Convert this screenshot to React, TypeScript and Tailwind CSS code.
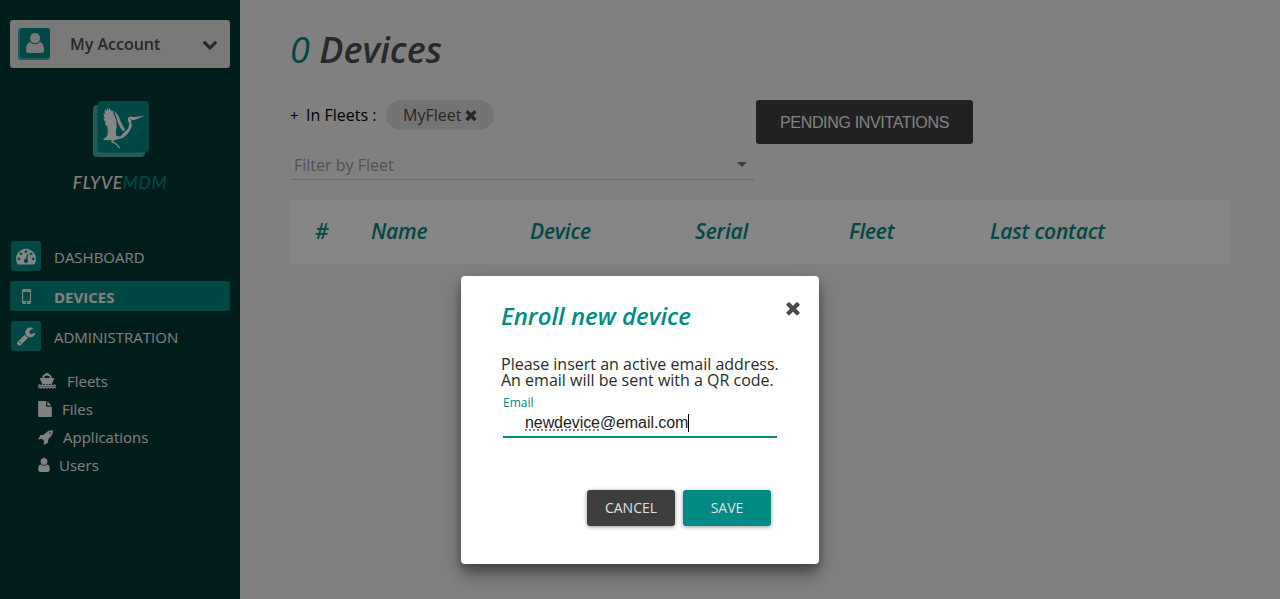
import React from "react";

const PATHS = {
  user: "M1536 1399q0 109-62.5 187t-150.5 78h-854q-88 0-150.5-78t-62.5-187q0-85 8.5-160.5t31.5-152 58.5-131 94-89 134.5-34.5q131 128 313 128t313-128q76 0 134.5 34.5t94 89 58.5 131 31.5 152 8.5 160.5zm-256-887q0 159-112.5 271.5t-271.5 112.5-271.5-112.5-112.5-271.5 112.5-271.5 271.5-112.5 271.5 112.5 112.5 271.5z",
  close: "M1490 1322q0 40-28 68l-136 136q-28 28-68 28t-68-28l-294-294-294 294q-28 28-68 28t-68-28l-136-136q-28-28-28-68t28-68l294-294-294-294q-28-28-28-68t28-68l136-136q28-28 68-28t68 28l294 294 294-294q28-28 68-28t68 28l136 136q28 28 28 68t-28 68l-294 294 294 294q28 28 28 68z",
  chevron: "M1683 808l-742 741q-19 19-45 19t-45-19l-742-741q-19-19-19-45.5t19-45.5l166-165q19-19 45-19t45 19l531 531 531-531q19-19 45-19t45 19l166 165q19 19 19 45.5t-19 45.5z",
  gauge: "M384 1152q0-53-37.5-90.5t-90.5-37.5-90.5 37.5-37.5 90.5 37.5 90.5 90.5 37.5 90.5-37.5 37.5-90.5zm192-448q0-53-37.5-90.5t-90.5-37.5-90.5 37.5-37.5 90.5 37.5 90.5 90.5 37.5 90.5-37.5 37.5-90.5zm428 481l101-382q6-26-7.5-48.5t-38.5-29.5-48 6.5-30 39.5l-101 382q-60 5-107 43.5t-63 98.5q-20 77 20 146t117 89 146-20 89-117q16-60-6-117t-72-91zm660-33q0-53-37.5-90.5t-90.5-37.5-90.5 37.5-37.5 90.5 37.5 90.5 90.5 37.5 90.5-37.5 37.5-90.5zm-640-640q0-53-37.5-90.5t-90.5-37.5-90.5 37.5-37.5 90.5 37.5 90.5 90.5 37.5 90.5-37.5 37.5-90.5zm448 192q0-53-37.5-90.5t-90.5-37.5-90.5 37.5-37.5 90.5 37.5 90.5 90.5 37.5 90.5-37.5 37.5-90.5zm320 448q0 261-141 483-19 29-54 29h-1402q-35 0-54-29-141-221-141-483 0-182 71-348t191-286 286-191 348-71 348 71 286 191 191 286 71 348z",
  wrench: "M448 1472q0-26-19-45t-45-19-45 19-19 45 19 45 45 19 45-19 19-45zm644-420l-682 682q-37 37-90 37-52 0-91-37l-106-108q-38-36-38-90 0-53 38-91l681-681q39 98 114.5 173.5t173.5 114.5zm634-435q0 39-23 106-47 134-164.5 217.5t-258.5 83.5q-185 0-316.5-131.5t-131.5-316.5 131.5-316.5 316.5-131.5q58 0 121.5 16.5t107.5 46.5q16 11 16 28t-16 28l-293 169v224l193 107q5-3 79-48.5t135.5-81 70.5-35.5q15 0 23.5 10t8.5 25z",
  mobile: "M976 1408q0-33-23.5-56.5t-56.5-23.5-56.5 23.5-23.5 56.5 23.5 56.5 56.5 23.5 56.5-23.5 23.5-56.5zm208-160v-704q0-13-9.5-22.5t-22.5-9.5h-512q-13 0-22.5 9.5t-9.5 22.5v704q0 13 9.5 22.5t22.5 9.5h512q13 0 22.5-9.5t9.5-22.5zm-192-848q0-16-16-16h-160q-16 0-16 16t16 16h160q16 0 16-16zm288-16v1024q0 52-38 90t-90 38h-512q-52 0-90-38t-38-90v-1024q0-52 38-90t90-38h512q52 0 90 38t38 90z",
  rocket: "M1440 448q0-40-28-68t-68-28-68 28-28 68 28 68 68 28 68-28 28-68zm224-288q0 249-75.5 430.5t-253.5 360.5q-81 80-195 176l-20 379q-2 16-16 26l-384 224q-7 4-16 4-12 0-23-9l-64-64q-13-14-8-32l85-276-281-281-276 85q-3 1-9 1-14 0-23-9l-64-64q-17-19-5-39l224-384q10-14 26-16l379-20q96-114 176-195 188-187 358-258t431-71q14 0 24 9.5t10 22.5z",
  file: "M1152 512v-472q22 14 36 28l408 408q14 14 28 36h-472zm-128 32q0 40 28 68t68 28h544v1056q0 40-28 68t-68 28h-1344q-40 0-68-28t-28-68v-1600q0-40 28-68t68-28h800v544z",
};

type IconProps = { name: keyof typeof PATHS; className?: string; box?: string };

function Icon({ name, className = "size-4", box = "0 0 1792 1792" }: IconProps) {
  return (
    <svg viewBox={box} className={`shrink-0 fill-current ${className}`} aria-hidden="true">
      <path d={PATHS[name]} />
    </svg>
  );
}

function AccountIcon() {
  return (
    <svg viewBox="0 0 18 20" className="h-5 w-[18px] fill-current" aria-hidden="true">
      <path d="M9 0a5 5 0 0 1 5 5q0 5.200-5 5.200T4 5a5 5 0 0 1 5-5z" />
      <path d="M4 9q2 2.300 5 2.300T14 9q4 1 4 8.500 0 2.500-2.500 2.500h-13Q0 20 0 17.500 0 10 4 9z" />
    </svg>
  );
}

function ShipIcon() {
  return (
    <svg viewBox="0 0 18 16" className="h-4 w-[18px] shrink-0 fill-current" aria-hidden="true">
      <path d="M7.500 0h3v1q3 .5 3.300 4H15q1.500 0 1 1.300L13.600 11.200H4.400L2 6.300Q1.500 5 3 5h1.200q.3-3.500 3.300-4zM9 2.500Q6.300 2.500 6 5h6q-.3-2.500-3-2.500z" />
      <path d="M0 13.200l1.500-1.400L3 13.200l1.500-1.400L6 13.200l1.500-1.400L9 13.200l1.500-1.400 1.500 1.400 1.500-1.400 1.500 1.400 1.500-1.400 1.500 1.400M0 15.200l1.500-1.400L3 15.200l1.500-1.400L6 15.200l1.500-1.400L9 15.200l1.500-1.400 1.500 1.400 1.500-1.400 1.500 1.400 1.500-1.400 1.500 1.400" className="fill-none stroke-current" strokeWidth="1.100" />
    </svg>
  );
}

function Logo() {
  return (
    <svg viewBox="0 0 56 56" className="size-14" aria-hidden="true">
      <rect x="0" y="4" width="52" height="52" rx="4" fill="#46aaa4" />
      <rect x="4.500" y="0" width="51.500" height="51.500" rx="4" fill="#008a85" />
      <g fill="#fff">
        <path d="M10.500 39q-1-1.200 1-1.800 3.500-2 3.200-6L14.500 26q-2.300-2-2.800-4.500l1.500.4q-2.500-2.400-3-5.200l2 .8q-2-3-1.600-5.300l1.800 1.300q-1.200-3-.6-5.200l2.100 2q-.5-2.200.3-3.600l1.700 2.600.8-2.300 1.500 3 1.600-.4 1.200 4.200 2.200 5.500.5 7q-1.500 4.500-.3 8.700l4 .6 4-4.500q4.500-3 4.800-7.500.3-2-1.300-4.200-.8-3.500 2.600-4 1.500-.1 2.800.6L52 14.700 41.500 19l-2.600.1q-1.400.5-.6 2.600 1.400 3.300-.8 6.500-4 8.500-11.500 9.800l-5.500 1.500-.2 1.300 3 1.500 4 4.200-1.300.8-3.500-4-4.300-1.800.4-2.200z" />
        <path d="M21 9.500q5 5 6.200 10l4.600 8.700-1.600 2.300q-5-6-6.200-12z" />
      </g>
      <circle cx="37.700" cy="18.300" r=".5" fill="#008a85" />
    </svg>
  );
}

function NavItem({ icon, label }: { icon: "gauge" | "wrench"; label: string }) {
  return (
    <a className="flex h-[30px] items-center pl-px">
      <span className="flex size-[30px] items-center justify-center rounded-[3px] bg-[#008a85] text-white">
        <Icon name={icon} className="size-5" />
      </span>
      <span className="ml-[13px] pt-px text-[15px] leading-5">{label}</span>
    </a>
  );
}

function Sidebar() {
  return (
    <aside className="flex h-full w-60 shrink-0 flex-col bg-[#003734] px-2.5 pt-5 text-[#f5f5f5]">
      <button className="flex h-12 items-center rounded-[3px] bg-[#e6e6e6] pl-2 pr-3 text-[#4a4a4a]">
        <span className="flex size-8 rounded-[3px] bg-[#46aaa4] pb-0.5 pl-0.5">
          <span className="flex size-[30px] items-center justify-center rounded-[3px] bg-[#008a85] text-[#e6e6e6]">
            <AccountIcon />
          </span>
        </span>
        <span className="ml-5 flex-1 text-left text-base font-semibold">My Account</span>
        <Icon name="chevron" />
      </button>
      <div className="mt-[33px] flex flex-col items-center">
        <div className="pl-0.5"><Logo /></div>
        <div className="mt-[14px] font-['Lato'] text-[17.500px] leading-6 font-medium tracking-[0.600px] italic">
          FLYVE<span className="text-[#008a85]">MDM</span>
        </div>
      </div>
      <nav className="mt-[46px] flex flex-col gap-2.5">
        <NavItem icon="gauge" label="DASHBOARD" />
        <a className="flex h-[30px] items-center rounded-[3px] bg-[#008a85] text-[15px] font-bold">
          <span className="flex w-8 justify-center">
            <Icon name="mobile" className="size-[21px]" />
          </span>
          <span className="ml-3 pt-px leading-5">DEVICES</span>
        </a>
        <NavItem icon="wrench" label="ADMINISTRATION" />
      </nav>
      <ul className="mt-4 flex flex-col pl-7 text-[15px] leading-7">
        <li className="flex h-7 items-center gap-[11px]"><ShipIcon />Fleets</li>
        <li className="flex h-7 items-center gap-2.5"><Icon name="file" box="128 0 1536 1792" className="h-4 w-[14px]" />Files</li>
        <li className="flex h-7 items-center gap-2.5"><Icon name="rocket" box="0 0 1664 1792" className="h-4 w-[15px]" />Applications</li>
        <li className="flex h-7 items-center gap-[9px]"><Icon name="user" box="256 128 1280 1536" className="h-[14px] w-[12px]" />Users</li>
      </ul>
    </aside>
  );
}

function Content() {
  return (
    <main className="flex-1 bg-[#f4f4f4] px-[50px] pt-[25px]">
      <h1 className="text-[36px] leading-[49px] font-semibold text-[#4f4f4f] italic">
        <span className="font-normal text-[#008a85]">0</span> Devices
      </h1>
      <div className="mt-[26px] flex h-[100px] items-start">
        <div className="w-[466px]">
          <div className="flex h-[30px] items-center text-base text-black">
            <span className="w-4 text-[15px]">+</span>
            <span className="w-20">In Fleets :</span>
            <span className="flex h-[30px] items-center gap-0.5 rounded-full bg-[#dcdcdc] pr-[15px] pl-[17px] text-[#4a4a4a]">
              MyFleet <Icon name="close" />
            </span>
          </div>
          <div className="mt-5 ml-0.5 flex h-[30px] w-[462px] items-center justify-between border-b border-[#cccccc] pr-[7px] pl-0.5 text-base text-[#999999]">
            Filter by Fleet
            <svg viewBox="0 0 10 5" className="h-[5px] w-2.5 fill-[#777777]"><path d="M0 0h10L5 5z" /></svg>
          </div>
        </div>
        <button className="h-11 w-[217px] rounded-[3px] bg-[#3f3f3f] pt-0.5 font-['Liberation_Sans'] text-base tracking-[-0.340px] text-[#f5f5f5]">
          PENDING INVITATIONS
        </button>
      </div>
      <div className="grid h-16 grid-cols-[81px_159px_165px_154px_141px_1fr] items-center rounded-[3px] bg-white text-[21px] font-semibold tracking-[-0.200px] text-[#008a85] italic">
        <span className="pl-[25px]">#</span>
        <span>Name</span>
        <span>Device</span>
        <span>Serial</span>
        <span>Fleet</span>
        <span>Last contact</span>
      </div>
    </main>
  );
}

function EnrollDialog() {
  return (
    <section
      role="dialog"
      className="absolute top-[276px] left-[461px] flex h-[288px] w-[358px] flex-col rounded bg-white px-10 pt-6 text-[#2b2b2b] shadow-[0_10px_20px_rgba(0,0,0,0.35),0_6px_8px_rgba(0,0,0,0.25)]"
    >
      <header className="flex h-8 items-center justify-between">
        <h2 className="text-2xl font-semibold text-[#008a85] italic">Enroll new device</h2>
        <button className="-mt-4 -mr-6 text-[#4a4a4a]"><Icon name="close" className="size-5" /></button>
      </header>
      <p className="mt-6 text-base leading-4 whitespace-nowrap">
        Please insert an active email address.
        <br />
        An email will be sent with a QR code.
      </p>
      <label className="mt-[7px] ml-0.5 w-[274px] text-xs leading-4 text-[#008a85]">
        Email
        <span className="flex h-[27px] items-center border-b-2 border-[#008a85] pb-0.5 pl-[22px] font-['Liberation_Sans'] text-base tracking-[-0.080px] text-[#222222]">
          <span className="underline decoration-[#888888] decoration-dotted decoration-2 underline-offset-2">newdevice</span>
          @email.com
          <span className="h-[18px] w-px bg-black" />
        </span>
      </label>
      <footer className="mt-[52px] flex justify-end gap-2 pr-2 text-sm text-[#e0e0e0]">
        <button className="h-9 w-[88px] rounded-[3px] bg-[#3e3e3e] shadow-[0_1px_4px_rgba(0,0,0,0.4)]">CANCEL</button>
        <button className="h-9 w-[88px] rounded-[3px] bg-[#008a85] shadow-[0_1px_4px_rgba(0,0,0,0.4)]">SAVE</button>
      </footer>
    </section>
  );
}

export default function App() {
  return (
    <div className="relative h-[599px] w-[1280px] overflow-hidden font-['Open_Sans',sans-serif]">
      <div className="flex h-full">
        <Sidebar />
        <Content />
      </div>
      <div className="absolute inset-0 bg-black/[0.475]" />
      <EnrollDialog />
    </div>
  );
}
